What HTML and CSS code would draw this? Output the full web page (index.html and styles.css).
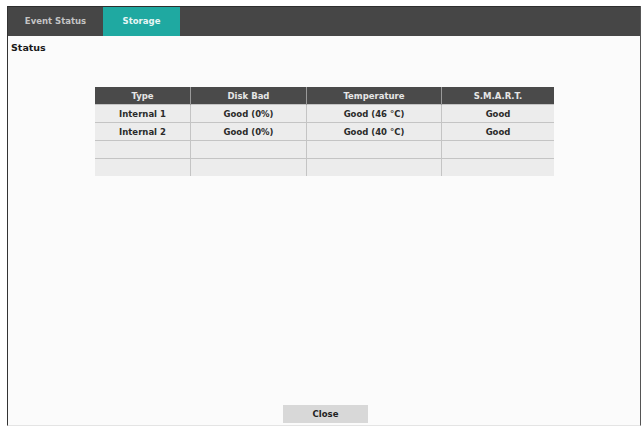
FILE: index.html
```html
<!doctype html>
<html>
<head>
<meta charset="utf-8">
<title>Status</title>
<link rel="stylesheet" href="styles.css">
</head>
<body>
	<div class="window">
		<div class="tabbar">
			<div class="tab">Event Status</div>
			<div class="tab active">Storage</div>
		</div>
		<div class="content">
			<div class="section-title">Status</div>
			<table class="disks">
				<tr>
					<th class="c-type">Type</th>
					<th class="c-bad">Disk Bad</th>
					<th class="c-temp">Temperature</th>
					<th class="c-smart">S.M.A.R.T.</th>
				</tr>
				<tr>
					<td>Internal 1</td>
					<td>Good (0%)</td>
					<td>Good (46 &deg;C)</td>
					<td>Good</td>
				</tr>
				<tr>
					<td>Internal 2</td>
					<td>Good (0%)</td>
					<td>Good (40 &deg;C)</td>
					<td>Good</td>
				</tr>
				<tr><td></td><td></td><td></td><td></td></tr>
				<tr><td></td><td></td><td></td><td></td></tr>
			</table>
			<div class="spacer"></div>
			<div class="buttons">
				<div class="button">Close</div>
			</div>
		</div>
	</div>
</body>
</html>
```

FILE: styles.css
```css
body {
	margin: 0;
	background: #ffffff;
	font-family: "DejaVu Sans", "Liberation Sans", sans-serif;
}

.window {
	margin: 6px 2px 0 7px;
	width: 632px;
	height: 419px;
	border-left: 1px solid #333333;
	border-right: 1px solid #555555;
	border-bottom: 1px solid #e4e4e4;
	background: #fbfbfb;
	display: flex;
	flex-direction: column;
}

.tabbar {
	height: 29px;
	background: #464646;
	border-top: 1px solid #2e2e2e;
	display: flex;
}

.tab {
	width: 95px;
	color: #c4c4c4;
	font-size: 8.5px;
	font-weight: bold;
	display: flex;
	align-items: center;
	justify-content: center;
	padding-bottom: 2px;
}

.tab.active {
	width: 77px;
	background: #1fa9a1;
	color: #e8f6f5;
}

.content {
	flex: 1;
	display: flex;
	flex-direction: column;
}

.section-title {
	font-size: 9.5px;
	font-weight: bold;
	color: #1a1a1a;
	padding: 6px 0 0 3px;
}

.disks {
	margin: 34px 0 0 87px;
	width: 459px;
	border-collapse: collapse;
	font-size: 8.5px;
	font-weight: bold;
	text-align: center;
}

.disks th {
	background: #4a4a4a;
	color: #e6e6e6;
	height: 17px;
	padding: 0;
	border-right: 1px solid #9a9a9a;
}

.disks td {
	background: #ececec;
	color: #2a2a2a;
	height: 17px;
	padding: 0;
	border-top: 1px solid #c4c4c4;
	border-right: 1px solid #c4c4c4;
}

.disks th:last-child,
.disks td:last-child {
	border-right: none;
}

.c-type { width: 95px; }
.c-bad { width: 115px; }
.c-temp { width: 134px; }

.spacer {
	flex: 1;
}

.buttons {
	display: flex;
	justify-content: center;
	padding: 0 0 2px 3px;
}

.button {
	width: 85px;
	height: 18px;
	background: #d8d8d8;
	color: #222222;
	font-size: 8.5px;
	font-weight: bold;
	display: flex;
	align-items: center;
	justify-content: center;
}
```
